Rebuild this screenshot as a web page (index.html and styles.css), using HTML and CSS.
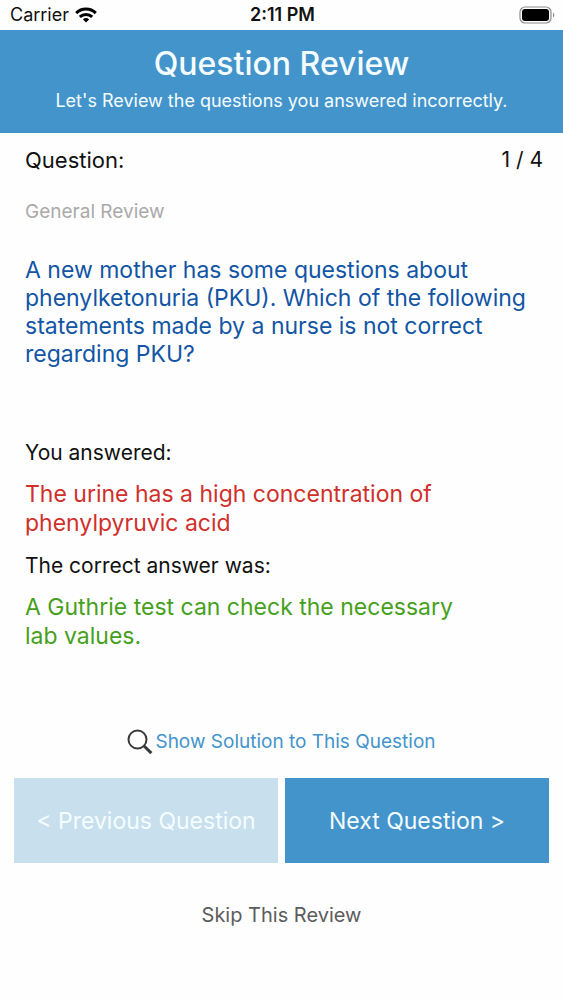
FILE: index.html
```
<!DOCTYPE html>
<html lang="en">
<head>
  <meta charset="UTF-8" />
  <meta name="viewport" content="width=device-width, initial-scale=1.0" />
  <title>Question Review</title>
  <link rel="stylesheet" href="styles.css">
</head>
<body>
  <div class="status-bar">
    <div class="status-left">
      <span>Carrier</span>
      <svg class="wifi" viewBox="0 0 22 16" aria-hidden="true">
        <g fill="none" stroke="#000" stroke-width="3">
          <path d="M1.2 6.1a14 14 0 0 1 19.6 0" />
          <path d="M4.8 9.9a9 9 0 0 1 12.4 0" />
        </g>
        <path d="M11 15.6l-3.1-3.1a4.6 4.6 0 0 1 6.2 0z" />
      </svg>
    </div>
    <span class="status-time">2:11 PM</span>
    <div class="status-right">
      <svg class="battery" viewBox="0 0 36 18" aria-hidden="true">
        <rect x="1" y="1" width="31" height="16" rx="5" fill="none" stroke="#8a8a8a" stroke-width="1.2" />
        <rect x="3" y="3" width="27" height="12" rx="3" />
        <path d="M34 6.5c1.8 1 1.8 4 0 5z" fill="#8a8a8a" />
      </svg>
    </div>
  </div>

  <header class="header">
    <h1>Question Review</h1>
    <p>Let's Review the questions you answered incorrectly.</p>
  </header>

  <main class="review">
    <div class="question-top">
      <span>Question:</span>
      <span class="counter">1 / 4</span>
    </div>
    <p class="category">General Review</p>
    <p class="question">A new mother has some questions about phenylketonuria (PKU). Which of the following statements made by a nurse is not correct regarding PKU?</p>

    <h2 class="label">You answered:</h2>
    <p class="answer wrong">The urine has a high concentration of phenylpyruvic acid</p>
    <h2 class="label">The correct answer was:</h2>
    <p class="answer correct">A Guthrie test can check the necessary lab values.</p>
  </main>

  <div class="actions">
    <button class="solution" type="button">
      <svg class="search" viewBox="0 0 26 26" aria-hidden="true">
        <g fill="none" stroke="#3a3a3a">
          <circle cx="10.5" cy="10.5" r="9" stroke-width="2" />
          <path d="M17 17l7.4 7.2" stroke-width="3" />
        </g>
      </svg>
      <span>Show Solution to This Question</span>
    </button>
    <div class="nav">
      <button class="nav-button" type="button" disabled>&lt; Previous Question</button>
      <button class="nav-button" type="button">Next Question &gt;</button>
    </div>
    <button class="skip" type="button">Skip This Review</button>
  </div>
</body>
</html>
```
FILE: styles.css
```
* {
  box-sizing: border-box;
}
body {
  margin: 0;
  background: #fefefe;
  color: #111;
  font-family: Inter, "Liberation Sans", sans-serif;
  font-size: 22px;
  line-height: 28px;
}
h1, h2, p {
  margin: 0;
  font-weight: 400;
}
button {
  border: 0;
  padding: 0;
  background: none;
  font: inherit;
  cursor: pointer;
}

/* Status bar */
.status-bar {
  display: grid;
  grid-template-columns: 1fr auto 1fr;
  align-items: center;
  height: 30px;
  padding: 0 8px 0 10px;
  font-size: 18px;
}
.status-left {
  display: flex;
  align-items: center;
  gap: 6px;
}
.status-time {
  font-weight: 600;
}
.status-right {
  display: flex;
  justify-content: flex-end;
}
.wifi {
  width: 22px;
  height: 16px;
}
.battery {
  width: 36px;
  height: 18px;
}

/* Header */
.header {
  padding: 14px 16px 18px;
  background: #4494cc;
  color: #f4fdff;
  text-align: center;
}
.header h1 {
  font-size: 32px;
  line-height: 40px;
  font-weight: 500;
}
.header p {
  padding-top: 3px;
  font-size: 18px;
}

/* Question and answers */
.review {
  padding: 13px 20px 0 25px;
}
.question-top {
  display: flex;
  justify-content: space-between;
}
.counter {
  font-size: 21px;
}
.category {
  padding-top: 24px;
  color: #aaa;
  font-size: 19px;
}
.question {
  padding: 30px 0 71px;
  color: #1255a5;
  font-size: 23px;
}
.label {
  font-size: 21px;
}
.answer {
  max-width: 450px;
  padding: 13px 0 14px;
  font-size: 23px;
  line-height: 29px;
}
.wrong {
  color: #d0302b;
}
.correct {
  color: #46a01c;
}

/* Bottom buttons */
.actions {
  display: flex;
  flex-direction: column;
  align-items: center;
  padding: 63px 14px 24px;
}
.solution {
  display: flex;
  align-items: center;
  gap: 2px;
  color: #4494cc;
  font-size: 19px;
}
.search {
  width: 26px;
  height: 26px;
}
.nav {
  display: grid;
  grid-template-columns: 1fr 1fr;
  gap: 7px;
  width: 100%;
  padding: 22px 0 38px;
}
.nav-button {
  height: 85px;
  background: #4494cc;
  color: #f4fdff;
  font-size: 23px;
}
.nav-button:disabled {
  background: #c8dfed;
  cursor: default;
}
.skip {
  color: #5c5c5c;
  font-size: 20px;
}
```
